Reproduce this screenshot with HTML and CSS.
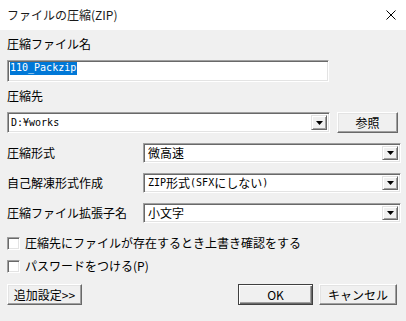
FILE: index.html
```html
<!DOCTYPE html>
<html lang="ja">
<head>
<meta charset="utf-8">
<title>ファイルの圧縮(ZIP)</title>
<link rel="stylesheet" href="styles.css">
</head>
<body>
<div class="titlebar">
  <span class="title">ファイルの圧縮(ZIP)</span>
  <svg class="close" width="10" height="10" viewBox="0 0 10 10"><path d="M0.5 0.5L9.5 9.5M9.5 0.5L0.5 9.5" stroke="#000" stroke-width="1" fill="none"/></svg>
</div>
<div class="content">
  <div class="label first">圧縮ファイル名</div>
  <div class="edit sunken"><span class="sel hw">110_Packzip</span></div>

  <div class="label second">圧縮先</div>
  <div class="dest-row">
    <div class="combo sunken dest">
      <span class="val"><span class="hw">D:¥works</span></span>
      <span class="drop"><svg width="7" height="4" viewBox="0 0 7 4"><path d="M0 0H7L3.5 4Z" fill="#000"/></svg></span>
    </div>
    <button class="btn browse">参照</button>
  </div>

  <div class="field">
    <span class="flabel">圧縮形式</span>
    <div class="combo sunken wide">
      <span class="val">微高速</span>
      <span class="drop"><svg width="7" height="4" viewBox="0 0 7 4"><path d="M0 0H7L3.5 4Z" fill="#000"/></svg></span>
    </div>
  </div>
  <div class="field">
    <span class="flabel">自己解凍形式作成</span>
    <div class="combo sunken wide">
      <span class="val"><span class="hw">ZIP</span>形式<span class="hw">(SFX</span>にしない<span class="hw">)</span></span>
      <span class="drop"><svg width="7" height="4" viewBox="0 0 7 4"><path d="M0 0H7L3.5 4Z" fill="#000"/></svg></span>
    </div>
  </div>
  <div class="field">
    <span class="flabel">圧縮ファイル拡張子名</span>
    <div class="combo sunken wide">
      <span class="val">小文字</span>
      <span class="drop"><svg width="7" height="4" viewBox="0 0 7 4"><path d="M0 0H7L3.5 4Z" fill="#000"/></svg></span>
    </div>
  </div>

  <div class="check c1"><span class="box"></span><span>圧縮先にファイルが存在するとき上書き確認をする</span></div>
  <div class="check c2"><span class="box"></span><span>パスワードをつける(P)</span></div>

  <div class="footer">
    <button class="btn more">追加設定&gt;&gt;</button>
    <button class="btn ok default">OK</button>
    <button class="btn cancel">キャンセル</button>
  </div>
</div>
</body>
</html>
```
FILE: styles.css
```css
html, body {
  margin: 0;
  padding: 0;
}
body {
  width: 406px;
  height: 321px;
  overflow: hidden;
  background: #f0f0f0;
  font-family: "Noto Sans CJK JP", "Noto Sans", sans-serif;
  font-size: 12px;
  color: #000;
}
.titlebar {
  height: 30px;
  background: #fff;
  display: flex;
  align-items: center;
  justify-content: space-between;
  padding: 0 10px 0 7px;
  box-sizing: border-box;
}
.title {
  line-height: 14px;
  color: #1a1a1a;
}
.close {
  display: block;
  margin-top: -1px;
}
.content {
  padding-left: 7px;
}
.label {
  line-height: 14px;
}
.label.first { margin-top: 7px; }
.label.second { margin-top: 7px; }

.sunken {
  box-sizing: border-box;
  background: #fff;
  border: 1px solid;
  border-color: #a0a0a0 #fff #fff #a0a0a0;
  box-shadow: inset 1px 1px #696969, inset -1px -1px #e3e3e3;
}
.hw {
  font-family: "DejaVu Sans Mono", "Liberation Mono", monospace;
  font-size: 10px;
}
.edit {
  margin-top: 9px;
  width: 322px;
  height: 22px;
  padding: 1px 0 0 2px;
  line-height: 13px;
}
.sel {
  display: inline-block;
  vertical-align: top;
  height: 13px;
  line-height: 12px;
  background: #0078d7;
  color: #fff;
  padding-right: 1px;
}
.dest-row {
  margin-top: 9px;
  display: flex;
  align-items: center;
}
.combo {
  display: flex;
  align-items: stretch;
  padding: 2px;
}
.combo .val {
  flex: 1;
  display: flex;
  align-items: center;
  padding-left: 1px;
  line-height: 14px;
  white-space: nowrap;
}
.combo .drop {
  width: 16px;
  box-sizing: border-box;
  display: flex;
  align-items: center;
  justify-content: center;
  background: #f0f0f0;
  border: 1px solid;
  border-color: #e3e3e3 #696969 #696969 #e3e3e3;
  box-shadow: inset 1px 1px #fff, inset -1px -1px #a0a0a0;
}
.combo .drop svg { display: block; }
.dest {
  width: 323px;
  height: 21px;
}
.btn {
  box-sizing: border-box;
  height: 21px;
  margin: 0;
  padding: 0;
  font-family: "Noto Sans CJK JP", "Noto Sans", sans-serif;
  font-size: 12px;
  line-height: 14px;
  color: #000;
  background: #f0f0f0;
  border: 1px solid;
  border-color: #fff #696969 #696969 #fff;
  box-shadow: inset -1px -1px #a0a0a0, inset 1px 1px #e3e3e3;
}
.browse {
  margin-left: 7px;
  width: 61px;
}
.field {
  margin-top: 10px;
  display: flex;
  align-items: center;
}
.flabel {
  width: 136px;
  line-height: 14px;
}
.wide {
  width: 258px;
  height: 20px;
}
.wide .val { padding-left: 2px; }
.check {
  display: flex;
  align-items: center;
  line-height: 14px;
}
.check.c1 { margin-top: 13px; }
.check.c2 { margin-top: 9px; }
.box {
  width: 13px;
  height: 13px;
  box-sizing: border-box;
  background: #fff;
  border: 1px solid;
  border-color: #a0a0a0 #fff #fff #a0a0a0;
  box-shadow: inset 1px 1px #696969, inset -1px -1px #e3e3e3;
  margin-right: 5px;
}
.footer {
  margin-top: 11px;
  display: flex;
  align-items: center;
  padding-right: 9px;
}
.more { width: 75px; }
.ok {
  margin-left: auto;
  width: 75px;
}
.default {
  border: 1px solid #404040;
  box-shadow: inset 1px 1px #fff, inset -1px -1px #696969, inset -2px -2px #a0a0a0;
}
.cancel {
  margin-left: 6px;
  width: 78px;
}
```
